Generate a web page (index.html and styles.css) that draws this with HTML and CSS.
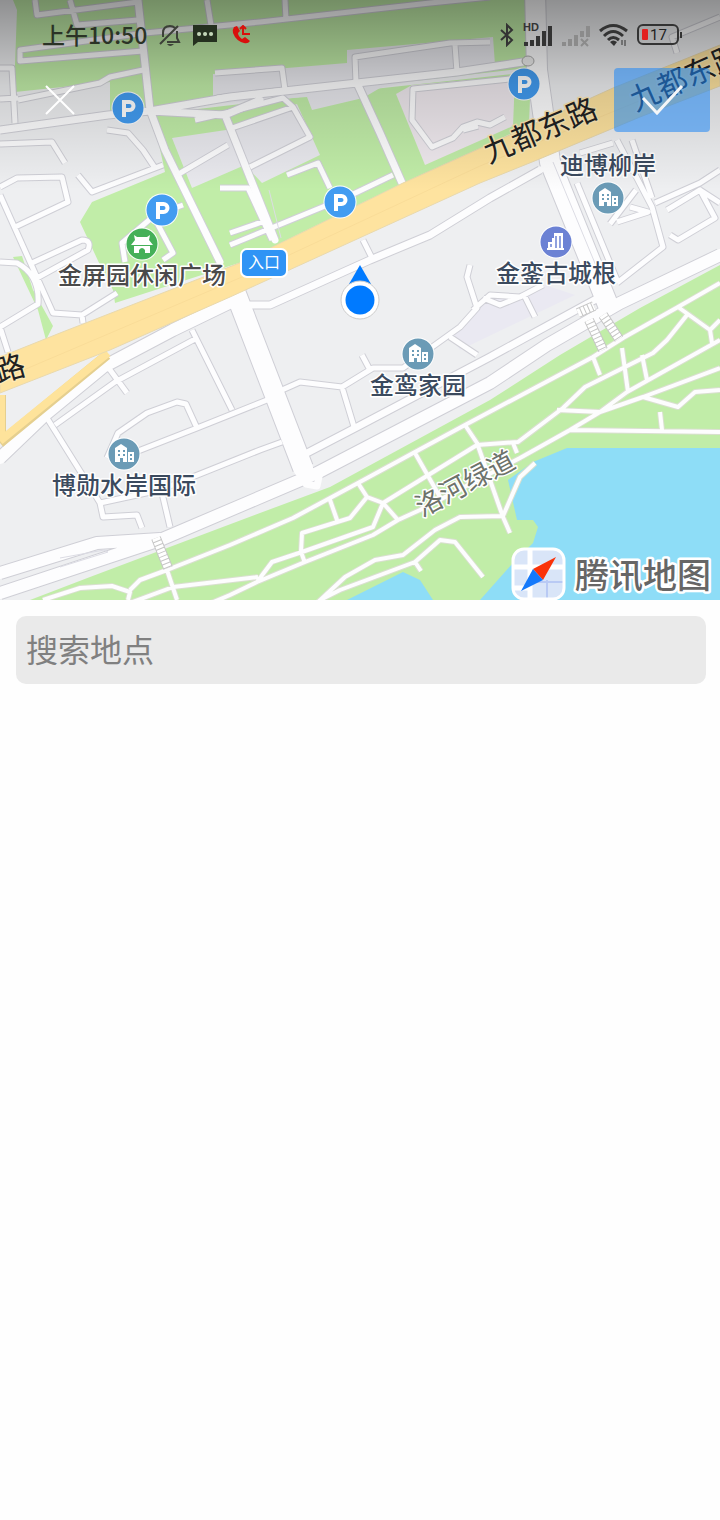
FILE: index.html
```html
<!DOCTYPE html>
<html lang="zh-CN">
<head>
    <meta charset="UTF-8">
    <meta name="viewport" content="width=device-width, initial-scale=1.0">
    <title>选择地点</title>
    <link rel="stylesheet" href="styles.css">
</head>
<body>
    <div class="map-box">
        <svg class="map" viewBox="0 0 720 600" role="img" aria-label="地图">
            <defs>
                <path id="road-s" d="M35 0L37 15L138 2M70 0L77 25L138 20M143 51L20 61V50L145 33L260 22L430 3L490-3M18 100L100 83L110 77L143 70M0 68H12L15 123M0 99L18 98M207 0L211 25M285 0L286 20M215 73L282 68L285 90M217 98L285 90M356 83L355 57L450 43L490 42M455 45L457 72M230 112L283 98L293 107L310 137L250 167M232 128L293 107M195 120L230 112M393 175L347 197L230 245M230 233L262 222M287 175L318 163L330 188M220 188H248L272 240M505 117L490 125L477 122L463 127L453 138L432 147L412 120L413 89L520 78M463 130L478 126M677 53L672 37L720 17M0 144L52 142L65 163M107 130L128 133L143 150L155 168M78 175L92 192L163 165M0 187L17 178L62 177L68 202L13 228M0 195L53 313L82 315L117 293M32 263L82 240Q92 240 88 250L37 278M0 262L17 263Q40 275 38 304L0 327M177 175L228 145M183 205L155 215L122 243L125 262M157 223L173 253L163 260M82 315L83 323M0 327L8 352M363 240L372 258M470 265L467 277L477 308L460 327L403 368H373L342 387L300 382L282 390M362 355L370 370M342 387L355 430M450 337L477 355M473 310L490 295L520 297L543 285M523 293L535 317M483 298L500 305L522 296M577 183L617 280M617 140L652 207L663 247L617 283M632 140L652 198M655 203L700 183L720 170M667 210L700 190L715 218L678 240L670 235M700 190L720 203M617 222L648 212L630 207M610 224L636 190M613 143L580 153M47 418L100 503L103 517L137 515L142 528M100 503L160 490L260 450L282 442M55 425L115 382L197 338M105 363L127 393M192 330L232 410M133 453L197 428L267 400M107 458L118 433L147 413L177 402L186 404L197 428M162 493L170 527"/>
                <path id="road-m" d="M0 130L108 115L150 111L230 97L357 83L457 72L523 62M138 0L150 110L165 150L220 262M150 111L225 115L260 100M225 115L275 240M357 83L380 133L402 183M250 305L270 305L370 260L430 235L490 198L540 170M307 453L357 427L490 357L600 297"/>
                <path id="road-l" d="M0 458L47 413L103 367L173 330L235 300M0 593L160 540L317 473L490 383L547 345L620 303L720 255M0 573L97 543L160 539"/>
                <path id="road-xl" d="M236 294L303 468M535-10L537 70L550 162L608 305"/>
                <path id="trail" d="M43 600L80 588L112 586L130 592L128 600M130 590L140 580L167 570L230 545L293 518L358 483L415 452L465 425L593 357L623 338L678 307L720 283M167 570L177 600M130 603L173 587L258 577M190 612L230 595L257 582L305 562L373 535L398 520L420 510L520 458L570 430L600 412L627 392L720 340M257 582L272 562L302 552L373 527L383 503L367 497L358 483M367 497L350 518L302 533L301 552L305 563M330 500L337 520M383 503L398 520M383 503L477 445L518 442L563 408L585 387L653 353L667 340L687 315M415 453L440 497M465 425L477 443L503 517L510 533M316 604L345 577L375 560L403 555L435 530L460 517L503 516L520 477L535 463M320 600L340 590L415 562L440 540L455 542L483 577M415 562L421 571M557 410L600 412M593 357L600 375M622 348L628 392M642 355L647 380M600 412L643 397L720 368M643 397L678 407L695 392L720 390M570 430L720 432M660 412L662 430M513 443L517 453M678 307L710 330L720 320M710 330L712 343"/>
                <path id="highway" d="M0 357L60 333L242 262L403 183L483 147L613 88L720 45V86L640 117L537 160L480 183L230 297L110 350L0 393Z"/>
                <g id="pin-parking">
                    <circle r="16.500" class="pin-ring"/>
                    <circle r="15.500" fill="#429cf1"/>
                    <path d="M-4 9V-6H1.500a4 4 0 0 1 0 8H-4" class="pin-letter"/>
                </g>
                <g id="pin-estate">
                    <circle r="16.500" class="pin-ring"/>
                    <circle r="15.500" fill="#6b9bb6"/>
                    <path d="M-9 8V-6L-3-10L3-6V8H-1V4H-4V8ZM4 8V-2H10V8Z" fill="#fff"/>
                    <path d="M-6-4h2v2h-2zM-1-4h2v2h-2zM-6 0h2v2h-2zM-1 0h2v2h-2zM6 0h2v2h-2zM6 4h2v2h-2z" fill="#6b9bb6"/>
                </g>
                <linearGradient id="shade" x1="0" y1="0" x2="0" y2="1">
                    <stop offset="0" stop-color="#000" stop-opacity=".4"/>
                    <stop offset=".45" stop-color="#000" stop-opacity=".14"/>
                    <stop offset="1" stop-color="#000" stop-opacity="0"/>
                </linearGradient>
            </defs>

            <!-- land, parks and water -->
            <rect width="720" height="600" fill="#eeeff1"/>
            <path class="park" d="M13 0H527V68L380 85L212 103L155 112H110V82L15 92V65L17 10Z"/>
            <path class="park" d="M155 114L300 97L531 72L529 125L483 147L403 183L242 262L115 303L113 290L100 265L80 222L92 202L165 172L158 140Z"/>
            <path class="park" d="M13 257L22 256L33 290L53 326L46 340L38 310Z"/>
            <path class="block" d="M347 50L493 37L495 65L380 88L363 98L312 110L307 97L213 104V74L347 63Z"/>
            <path class="block" d="M172 138L226 130L297 104L320 155L262 183L245 165L192 188Z"/>
            <path class="block pink" d="M396 94L412 85L515 76L513 126L425 165Z"/>
            <path class="block cool" d="M483 300L522 296L545 285L575 295L460 350L450 335Z"/>
            <path class="park" d="M30 600L90 577L260 513L330 487L490 400L560 355L640 308L720 265V600Z"/>
            <path class="water" d="M720 448L567 448L533 462L508 480L517 520H533L538 527L533 543L513 563L480 600H720Z"/>
            <path class="water" d="M347 600L403 572L420 580L433 600Z"/>

            <!-- roads: every casing first, then the fills -->
            <use href="#trail" class="casing w-trail"/>
            <use href="#trail" class="fill f-trail"/>
            <use href="#road-s" class="casing w-s"/>
            <use href="#road-m" class="casing w-m"/>
            <use href="#road-l" class="casing w-l"/>
            <use href="#road-xl" class="casing w-xl"/>
            <use href="#road-s" class="fill f-s"/>
            <use href="#road-m" class="fill f-m"/>
            <use href="#road-l" class="fill f-l"/>
            <use href="#road-xl" class="fill f-xl"/>
            <path d="M297 460L306 484L317 486L320 472" class="fill f-m"/>
            <path d="M60 558L104 550L108 552L60 567" class="divider"/>
            <path d="M553 162L604 285M269 190L281 238" class="divider"/>
            <path d="M0 443L107 355M1 395V440" class="casing branch"/>
            <path d="M0 441L108 353M1 395V440" class="branch-fill"/>
            <use href="#highway" class="highway"/>
            <path d="M0 380L242 277L480 166L720 68" class="highway-line"/>
            <ellipse cx="528" cy="61" rx="6" ry="5" fill="#eee" stroke="#aaa"/>

            <!-- steps -->
            <path d="M156 538L168 568M589 320L603 350M603 315L619 339M578 313L594 306" class="steps-edge"/>
            <path d="M156 538L168 568M589 320L603 350M603 315L619 339M578 313L594 306" class="steps"/>

            <!-- road names -->
            <g class="road-name">
                <text transform="translate(540 130) rotate(-23)" y="11">九都东路</text>
                <text transform="translate(686 77) rotate(-24)" y="11">九都东路</text>
                <text transform="translate(10 368) rotate(-16)" y="11">路</text>
            </g>
            <text class="trail-name" transform="translate(465 483) rotate(-28)" y="10">洛河绿道</text>

            <!-- places -->
            <use href="#pin-parking" x="128" y="108"/>
            <use href="#pin-parking" x="524" y="84"/>
            <use href="#pin-parking" x="162" y="210"/>
            <use href="#pin-parking" x="340" y="202"/>
            <use href="#pin-estate" x="608" y="198"/>
            <use href="#pin-estate" x="418" y="354"/>
            <use href="#pin-estate" x="124" y="454"/>
            <g transform="translate(556 242)">
                <circle r="16.500" class="pin-ring"/>
                <circle r="15.500" fill="#6c82d4"/>
                <path d="M-9 8V6H-8V0H-4V-4H-2V-9H7V6H8V8Z" fill="#fff"/>
                <path d="M0 6V-6M4 6V-6M-5 5V2" stroke="#6c82d4" stroke-width="1.500"/>
            </g>
            <g transform="translate(142 244)">
                <circle r="16.500" class="pin-ring"/>
                <circle r="15.500" fill="#45b058"/>
                <path d="M-8-9L-5-7H5L8-9L7-4L11 1H-11L-7-4ZM-8 2H8V9H3V6Q0 2-3 6V9H-8Z" fill="#fff"/>
            </g>
            <g class="place-name">
                <text x="608" y="174">迪博柳岸</text>
                <text x="556" y="282">金銮古城根</text>
                <text x="418" y="394">金鸾家园</text>
                <text x="124" y="494">博勋水岸国际</text>
                <text x="142" y="284" class="park-name">金屏园休闲广场</text>
            </g>
            <rect x="241" y="249" width="46" height="28" rx="6" fill="#2f94f5" stroke="#fff" stroke-width="2"/>
            <text x="264" y="268" class="entry">入口</text>

            <!-- current position -->
            <path d="M360 265L371 284H349Z" fill="#007aff"/>
            <circle cx="360" cy="300" r="19" fill="#fff" stroke="#ccc"/>
            <circle cx="360" cy="300" r="14.500" fill="#007aff"/>

            <!-- map provider -->
            <rect x="513" y="549" width="51" height="50" rx="11" fill="#d9e5f8"/>
            <path d="M530 549V599M513 567H564M513 588H530" stroke="#fff" stroke-width="5"/>
            <path d="M547 580V599M530 582H564" stroke="#b9caf4" stroke-width="2"/>
            <rect x="513" y="549" width="51" height="50" rx="11" fill="none" stroke="#fff" stroke-width="3"/>
            <path d="M556 557L533 569L543 580Z" fill="#fa3209"/>
            <path d="M521 591L533 569L543 580Z" fill="#1479fb"/>
            <text x="643" y="588" class="provider">腾讯地图</text>

            <rect width="720" height="190" fill="url(#shade)"/>
        </svg>

        <div class="status-bar">
            <div class="status-left">
                <span class="time">上午10:50</span>
                <svg width="24" height="24" viewBox="0 0 24 24" fill="none" stroke="#3c4038" stroke-width="2">
                    <path d="M5 14V10Q5 3 12 3Q15 3 17 5M19 8V15L21 19H9M2 21L20 3"/>
                    <path d="M9 21H16Q12 25 9 21Z" fill="#3c4038" stroke="none"/>
                </svg>
                <svg width="24" height="24" viewBox="0 0 24 24">
                    <path d="M0 2H24V19H5L0 23Z" fill="#25301f"/>
                    <path d="M6 11h.1M12 11h.1M18 11h.1" stroke="#c3d6b8" stroke-width="4" stroke-linecap="round"/>
                </svg>
                <svg class="missed-call" width="20" height="20" viewBox="0 0 20 20">
                    <path d="M2 2Q0 5 1 8Q4 16 12 18Q16 19 18 16L13 12L10 14Q6 11 6 8L8 6L5 1Z" fill="#d9100d"/>
                    <path d="M11 1V9H18M8 4L11 1L14 4" fill="none" stroke="#d9100d" stroke-width="2"/>
                </svg>
            </div>
            <div class="status-right">
                <svg width="16" height="24" viewBox="0 0 16 24" fill="none" stroke="#333" stroke-width="2">
                    <path d="M2 7L13 17L8 22V2L13 7L2 17"/>
                </svg>
                <svg width="30" height="26" viewBox="0 0 30 26">
                    <path d="M3 20v4M9 18v6M15 14v10M21 9v15M27 4v20" stroke="#333" stroke-width="4"/>
                    <text x="0" y="9" class="hd">HD</text>
                </svg>
                <svg width="30" height="26" viewBox="0 0 30 26">
                    <path d="M3 20v4M9 17v7M15 13v11M21 9v6M27 4v11" stroke="#8b8b8b" stroke-width="4"/>
                    <path d="M20 17L27 24M27 17L20 24" stroke="#8b8b8b" stroke-width="2"/>
                </svg>
                <svg width="30" height="24" viewBox="0 0 30 24" fill="none" stroke="#333" stroke-width="3">
                    <path d="M1 8Q14-3 28 8M5 13Q14 4 24 13M9 17Q14 12 20 17"/>
                    <path d="M11 19Q14 16 18 19L15 23Z" fill="#333" stroke="none"/>
                    <path d="M23 22V17M26 17V23" stroke-width="1"/>
                </svg>
                <svg width="46" height="24" viewBox="0 0 46 24">
                    <rect x="1" y="2" width="40" height="19" rx="5" fill="none" stroke="#333" stroke-width="2"/>
                    <rect x="5" y="6" width="6" height="11" rx="1" fill="#e22020"/>
                    <path d="M44 9V15" stroke="#333" stroke-width="2"/>
                    <text x="13" y="17" class="battery">17</text>
                </svg>
            </div>
        </div>

        <button type="button" class="close-btn" aria-label="关闭">
            <svg width="32" height="32" viewBox="0 0 32 32" fill="none" stroke="#fff" stroke-width="2">
                <path d="M2 2L30 30M30 2L2 30"/>
            </svg>
        </button>
        <button type="button" class="ok-btn" aria-label="确定">
            <svg width="44" height="36" viewBox="0 0 44 36" fill="none" stroke="#f4f6f8" stroke-width="3">
                <path d="M3 16L17 31L42 4"/>
            </svg>
        </button>
    </div>

    <form class="search">
        <input type="search" class="search-input" placeholder="搜索地点" aria-label="搜索地点">
    </form>
</body>
</html>
```
FILE: styles.css
```css
body {
    margin: 0;
    background: #fefefe;
    font-family: "Noto Sans CJK SC", sans-serif;
}
.map-box {
    position: relative;
}
.map {
    display: block;
    width: 100%;
    height: auto;
}

/* areas */
.park {
    fill: #c1eda8;
}
.block {
    fill: #e9e9ee;
}
.pink {
    fill: #efe9ee;
}
.cool {
    fill: #eae9f2;
}
.water {
    fill: #8eddf7;
}

/* roads */
.casing,
.fill {
    fill: none;
    stroke-linejoin: round;
}
.casing {
    stroke: #cfcfd6;
}
.fill {
    stroke: #fdfdfe;
    stroke-linecap: round;
}
.w-trail {
    stroke: #d9dfcf;
    stroke-width: 6px;
}
.f-trail {
    stroke-width: 4px;
    stroke-linecap: butt;
}
.w-s { stroke-width: 7px; }
.f-s { stroke-width: 5px; stroke-linecap: butt; }
.w-m { stroke-width: 9px; }
.f-m { stroke-width: 7px; }
.w-l { stroke-width: 14px; }
.f-l { stroke-width: 12px; }
.w-xl { stroke-width: 22px; }
.f-xl { stroke-width: 20px; }
.divider {
    fill: none;
    stroke: #dcdce4;
}
.branch {
    stroke: #e5cf8f;
    stroke-width: 10px;
}
.branch-fill {
    fill: none;
    stroke: #fee39b;
    stroke-width: 8px;
}
.highway {
    fill: #fee39f;
    stroke: #e9d9ad;
}
.highway-line {
    fill: none;
    stroke: #f9dc98;
}
.steps-edge {
    stroke: #c6c6c6;
    stroke-width: 10px;
}
.steps {
    stroke: #fff;
    stroke-width: 8px;
    stroke-dasharray: 3 1;
}

/* map labels */
.map text {
    text-anchor: middle;
    paint-order: stroke;
    stroke: #fff;
    stroke-width: 3px;
    stroke-linejoin: round;
}
.road-name {
    font-size: 30px;
    fill: #222;
}
.map .road-name text {
    stroke: #fee9b5;
}
.trail-name {
    font-size: 27px;
    fill: #6d736b;
}
.place-name {
    font-size: 24px;
    font-weight: 500;
    fill: #3b4a5e;
}
.park-name {
    fill: #4a4a4a;
}
.map .entry {
    font-size: 16px;
    fill: #fff;
    stroke: none;
}
.map .provider {
    font-size: 34px;
    font-weight: 500;
    fill: #666;
    stroke-width: 5px;
}
.pin-ring {
    fill: #fff;
}
.pin-letter {
    fill: none;
    stroke: #fff;
    stroke-width: 4px;
}

/* over the map */
.status-bar {
    position: absolute;
    top: 0;
    left: 0;
    right: 0;
    display: flex;
    justify-content: space-between;
    align-items: center;
    height: 70px;
    padding: 0 37px 0 42px;
}
.status-left,
.status-right {
    display: flex;
    align-items: center;
}
.status-left {
    gap: 11px;
}
.status-right {
    gap: 8px;
}
.missed-call {
    margin-left: 4px;
}
.time {
    font-size: 23px;
    font-weight: 500;
    line-height: 30px;
    padding-bottom: 2px;
    color: #2b3326;
}
.hd {
    font: bold 11px "Liberation Sans", sans-serif;
    fill: #333;
}
.battery {
    font: 15px Roboto, sans-serif;
    fill: #222;
}
button {
    display: flex;
    align-items: center;
    justify-content: center;
    padding: 0;
    border: none;
    cursor: pointer;
}
.close-btn {
    position: absolute;
    top: 68px;
    left: 28px;
    width: 64px;
    height: 64px;
    background: transparent;
}
.ok-btn {
    position: absolute;
    top: 68px;
    right: 10px;
    width: 96px;
    height: 64px;
    border-radius: 4px;
    background: rgba(30, 135, 245, 0.55);
}

/* search */
.search {
    padding: 16px 14px 16px 16px;
}
.search-input {
    display: block;
    box-sizing: border-box;
    width: 100%;
    height: 68px;
    padding: 0 10px 4px;
    border: none;
    border-radius: 10px;
    outline: none;
    background: #eaeaea;
    font-family: inherit;
    font-size: 32px;
    color: #333;
    appearance: none;
}
.search-input::placeholder {
    color: #808080;
    opacity: 1;
}
```
